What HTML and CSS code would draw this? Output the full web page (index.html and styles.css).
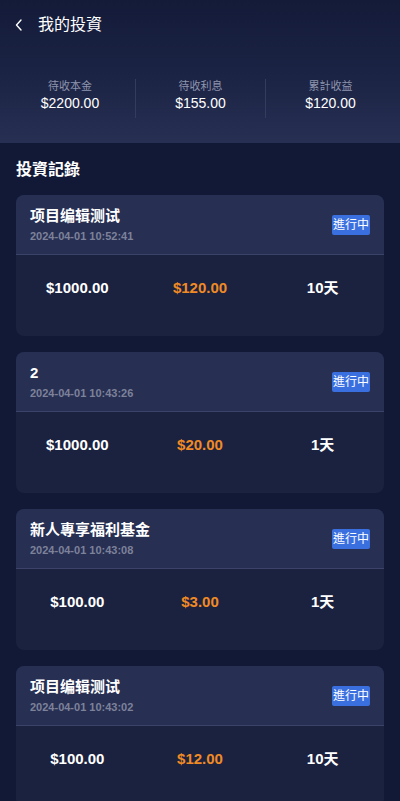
FILE: index.html
```html
<!DOCTYPE html>
<html lang="zh-Hant">
<head>
<meta charset="utf-8">
<title>我的投資</title>
<link rel="stylesheet" href="styles.css">
</head>
<body>
<div class="top">
  <div class="header">
    <svg class="back" width="10" height="14" viewBox="0 0 10 14"><path d="M7 2 L2.5 7 L7 12" fill="none" stroke="#ffffff" stroke-width="1.4" stroke-linecap="round" stroke-linejoin="round"/></svg>
    <span class="header-title">我的投資</span>
  </div>
  <div class="summary">
    <div class="sum-item"><div class="sum-label">待收本金</div><div class="sum-value">$2200.00</div></div>
    <div class="sum-item"><div class="sum-label">待收利息</div><div class="sum-value">$155.00</div></div>
    <div class="sum-item"><div class="sum-label">累計收益</div><div class="sum-value">$120.00</div></div>
  </div>
</div>
<div class="section-title">投資記錄</div>
<div class="list">
  <div class="card">
    <div class="card-head">
      <div class="info"><div class="name">项目编辑测试</div><div class="date">2024-04-01 10:52:41</div></div>
      <span class="badge">進行中</span>
    </div>
    <div class="card-body"><div class="val">$1000.00</div><div class="val orange">$120.00</div><div class="val">10天</div></div>
  </div>
  <div class="card">
    <div class="card-head">
      <div class="info"><div class="name">2</div><div class="date">2024-04-01 10:43:26</div></div>
      <span class="badge">進行中</span>
    </div>
    <div class="card-body"><div class="val">$1000.00</div><div class="val orange">$20.00</div><div class="val">1天</div></div>
  </div>
  <div class="card">
    <div class="card-head">
      <div class="info"><div class="name">新人專享福利基金</div><div class="date">2024-04-01 10:43:08</div></div>
      <span class="badge">進行中</span>
    </div>
    <div class="card-body"><div class="val">$100.00</div><div class="val orange">$3.00</div><div class="val">1天</div></div>
  </div>
  <div class="card">
    <div class="card-head">
      <div class="info"><div class="name">项目编辑测试</div><div class="date">2024-04-01 10:43:02</div></div>
      <span class="badge">進行中</span>
    </div>
    <div class="card-body"><div class="val">$100.00</div><div class="val orange">$12.00</div><div class="val">10天</div></div>
  </div>
</div>
</body>
</html>
```

FILE: styles.css
```css
html, body {
  margin: 0;
  padding: 0;
}
body {
  background: #111936;
  font-family: "Liberation Sans", "Noto Sans CJK TC", sans-serif;
  color: #ffffff;
}
.top {
  height: 143px;
  background: linear-gradient(180deg, #141b39 0%, #1b2344 50%, #272f53 100%);
  display: flex;
  flex-direction: column;
}
.header {
  height: 44px;
  padding-top: 3px;
  display: flex;
  align-items: center;
  padding-left: 14px;
}
.back {
  display: block;
}
.header-title {
  font-size: 16px;
  margin-left: 14px;
  line-height: 20px;
}
.summary {
  margin-top: 32px;
  padding: 0 5px;
  display: grid;
  grid-template-columns: 1fr 1fr 1fr;
}
.sum-item {
  text-align: center;
  height: 39px;
  border-left: 1px solid #343c5e;
}
.sum-item:first-child {
  border-left: none;
}
.sum-label {
  font-size: 11px;
  line-height: 14px;
  color: #8d94ad;
}
.sum-value {
  font-size: 14px;
  line-height: 20px;
  color: #ffffff;
}
.section-title {
  font-size: 16px;
  font-weight: bold;
  line-height: 22px;
  padding: 16px 16px 14px;
}
.list {
  padding: 0 16px;
  display: flex;
  flex-direction: column;
  gap: 16px;
}
.card {
  border-radius: 8px;
  overflow: hidden;
  background: #1b2240;
}
.card-head {
  height: 59px;
  background: #272f53;
  border-bottom: 1px solid #3b4468;
  padding: 0 14px;
  display: flex;
  align-items: center;
  justify-content: space-between;
}
.name {
  font-size: 15px;
  font-weight: bold;
  line-height: 18px;
}
.date {
  font-size: 11px;
  line-height: 13px;
  margin-top: 5px;
  color: #7d829a;
  font-weight: bold;
}
.badge {
  background: #3a6fe0;
  color: #ffffff;
  font-size: 12px;
  line-height: 18px;
  padding: 1px 1px;
  border-radius: 2px;
}
.card-body {
  height: 81px;
  box-sizing: border-box;
  padding-top: 23px;
  display: grid;
  grid-template-columns: 1fr 1fr 1fr;
}
.val {
  text-align: center;
  font-size: 15px;
  font-weight: bold;
  line-height: 20px;
}
.orange {
  color: #f08a24;
}
```
